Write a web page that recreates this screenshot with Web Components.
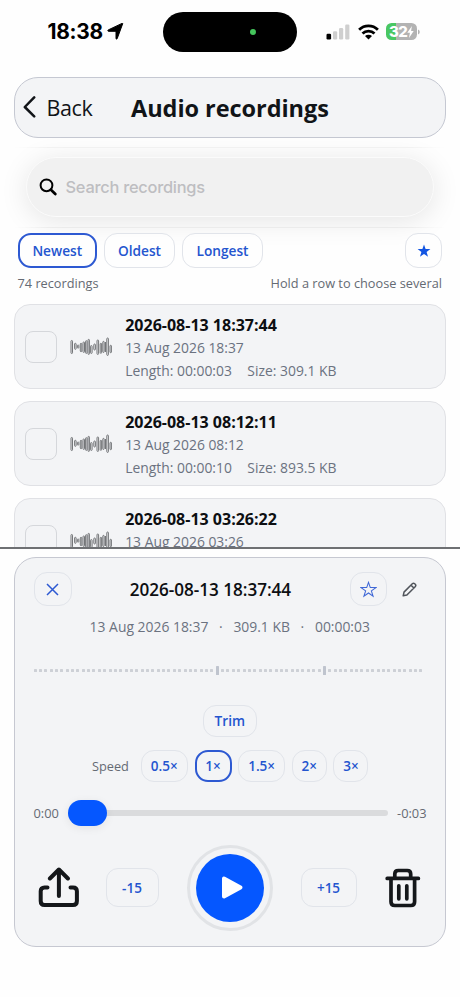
<!DOCTYPE html>
<html lang="en">
<head>
<meta charset="utf-8">
<title>Audio recordings</title>
<style>
html,body{margin:0;padding:0;background:#fefefe}
body{width:460px;height:997px;overflow:hidden;font-family:"Open Sans","Noto Sans",sans-serif;color:#111418}
</style>
</head>
<body>
<recordings-app></recordings-app>
<script>
const define = (name, html) => {
  const t = document.createElement('template');
  t.innerHTML = '<style>*{box-sizing:border-box}:host{box-sizing:border-box}svg{display:block;flex:none}</style>' + html;
  customElements.define(name, class extends HTMLElement {
    constructor() {
      super();
      this.attachShadow({ mode: 'open' }).appendChild(t.content.cloneNode(true));
    }
  });
};

define('status-bar', `
<style>
:host{display:grid;grid-template-columns:163px 134px 1fr;height:77px;padding-top:12px;align-items:start}
.l,.r{display:flex;align-items:center;height:39px}
.l{padding-left:47.5px;gap:4px;font:700 20.9px/39px Inter,sans-serif;letter-spacing:-.25px;color:#000}
.isl{height:39.5px;border-radius:20px;background:#000;display:flex;align-items:center;justify-content:flex-end;padding-right:41px}
.isl i{width:6.5px;height:6.5px;border-radius:50%;background:#45c55c}
.r{padding-left:29px}
.bat{margin-left:7.5px;width:31px;height:16.5px;border-radius:5.5px;background:linear-gradient(90deg,#49c763 0 10px,#b3b3b3 10px);display:flex;align-items:center;justify-content:center;color:#fff;font:800 15px/16px Inter,sans-serif;letter-spacing:-.7px}
</style>
<div class="l"><span>18:38</span><svg width="17" height="17" viewBox="0 0 17 17"><path d="M15.700.7 10.200 15.600c-.3.8-1.200.7-1.200-.2V8.300H1.700C.6 8.300.5 7.300 1.300 6.900L15 .4c.6-.2.9-.1.700.3z" fill="#000" stroke="#000" stroke-width="1" stroke-linejoin="round"/></svg></div>
<div class="isl"><i></i></div>
<div class="r">
<svg width="25" height="16" viewBox="0 0 25 16"><rect x="0.5" y="9.8" width="4.6" height="5.7" rx="1.2"/><g fill="#cfcfcf"><rect x="7" y="7.3" width="4.2" height="8.2" rx="1.2"/><rect x="13" y="4" width="4.2" height="11.5" rx="1.2"/><rect x="19.2" y=".6" width="4.2" height="14.9" rx="1.2"/></g></svg>
<svg style="margin-left:6.5px" width="21" height="16" viewBox="0 0 21 16"><g fill="none" stroke="#000" stroke-width="2.8"><path d="M1.1 5.8a13.4 13.4 0 0 1 18.8 0"/><path d="M4.5 9.5a8.6 8.6 0 0 1 12 0"/></g><path d="M7 12.1a5.1 5.1 0 0 1 7 0L10.5 15.5z"/></svg>
<div class="bat"><span>32</span><svg width="7" height="12" viewBox="0 0 7 12"><path d="M4.9 0 .3 6.7h2.6L2 12l4.7-6.9H4.1z" fill="#fff"/></svg></div>
<svg style="margin-left:1px" width="2" height="6" viewBox="0 0 2 6"><path d="M0 .5Q1.8 1.2 1.8 3T0 5.5z" fill="#b3b3b3"/></svg>
</div>`);

define('nav-header', `
<style>
:host{display:flex;align-items:center;height:60.5px;margin:0 14px;padding-left:8px;border:1px solid #c5c8d2;border-radius:24px;background:#f3f4f6}
.b{font-size:21.5px;line-height:30px;margin-left:9.5px;width:84.5px;letter-spacing:-.4px;padding-top:1px}
.t{font-size:23.5px;line-height:30px;font-weight:700;letter-spacing:-.05px;padding-top:1px}
</style>
<svg width="14" height="22" viewBox="0 0 14 22"><path d="M11.2 1.4 1.8 11l9.4 9.4" fill="none" stroke="#111418" stroke-width="2.5" stroke-linecap="round" stroke-linejoin="round"/></svg>
<span class="b"><slot name="back"></slot></span><span class="t"><slot></slot></span>`);

define('search-field', `
<style>
:host{display:block;margin-top:9px;height:81px;padding:10.5px 26px 0;
background:linear-gradient(90deg,transparent,#f5f5f5 8% 92%,transparent) 14px 0/432px 1px no-repeat,linear-gradient(90deg,transparent,#f3f3f3 8% 92%,transparent) 14px 80px/432px 1px no-repeat}
.f{height:59.5px;border-radius:30px;background:#f1f1f1;border:1.5px solid #fbfbfb;box-shadow:0 4px 28px rgba(0,0,0,.10);display:flex;align-items:center;padding-left:12px;font:500 16.4px/24px Inter,sans-serif;color:#bebec1;letter-spacing:-.25px}
svg{margin-right:8.5px}
</style>
<div class="f"><svg width="18" height="18" viewBox="0 0 18 18"><circle cx="7.5" cy="7.3" r="5.9" fill="none" stroke="#000" stroke-width="2"/><path d="M11.9 11.8l4.4 4.2" stroke="#000" stroke-width="2.7" stroke-linecap="round"/></svg><slot></slot></div>`);

define('pill-button', `
<style>
:host{display:inline-flex;align-items:center;justify-content:center;flex:none;height:34.5px;border:1px solid #e1e4ea;border-radius:13px;color:#2455cf;font-weight:600;font-size:13.7px;line-height:20px;background:var(--pill,transparent);white-space:nowrap}
:host([active]){border:2px solid #2d59d2}
</style><slot></slot>`);

define('filter-bar', `
<style>
:host{display:block;padding:0 18px 0 17.5px;margin-top:5.5px}
.c{display:flex;gap:7px}
.c>:last-child{margin-left:auto}
.c pill-button{padding-top:1px}
.m{display:flex;justify-content:space-between;font-size:12.75px;line-height:18px;margin-top:6px;color:#656a73}
pill-button{--pill:rgba(254,254,254,.8)}
</style>
<div class="c"><pill-button active style="width:79.5px">Newest</pill-button><pill-button style="width:71px">Oldest</pill-button><pill-button style="width:81px">Longest</pill-button><pill-button style="width:37px"><svg width="14" height="14" viewBox="0 0 14 14"><path d="M7 .5l1.6 4.6h4.8L9.6 8l1.4 4.7-4-2.8-4 2.8L4.4 8 .6 5.1h4.8z" fill="#1355e2"/></svg></pill-button></div>
<div class="m"><span>74 recordings</span><span>Hold a row to choose several</span></div>`);

define('recording-row', `
<style>
:host{display:flex;height:85px;border:1px solid #e0e1e5;border-radius:16px;background:#f3f4f6;padding:0 0 0 10px;flex:none;align-items:center}
.k{width:32px;height:32px;border:1.5px solid #d5d7db;border-radius:8px;margin-right:12.8px}
.x{margin-left:13.4px;align-self:flex-start;padding-top:8.5px;line-height:23px;font-size:13.88px;color:#6b7280}
b{display:block;color:#0d0f12;font-size:16px;line-height:22px;margin-bottom:.5px}
.y{display:flex;gap:15.5px}
</style>
<div class="k"></div>
<svg width="42" height="20" viewBox="0 0 42 20"><g fill="none" stroke="#6d6f72" stroke-width=".95">
<rect x="1" y="3.5" width="1.5" height="13" rx=".7"/><rect x="4.6" y="6.3" width="1.5" height="6" rx=".7"/><rect x="7.4" y="8" width="1.4" height="3.2" rx=".7"/><rect x="10.3" y="6.3" width="1.5" height="8.4" rx=".7"/><rect x="13" y="5" width="1.5" height="10.4" rx=".7"/><rect x="15.6" y="3.7" width="1.4" height="12.7" rx=".7"/><rect x="18" y="2.4" width="1.4" height="15" rx=".7"/><rect x="20.6" y="8.6" width="1.5" height="7.8" rx=".7"/><rect x="23.8" y="7" width="1.6" height="6" rx=".8"/><rect x="27" y="3" width="1.6" height="14.4" rx=".8"/><rect x="30.2" y="6.3" width="1.4" height="10" rx=".7"/><rect x="32.8" y="4.4" width="1.4" height="11" rx=".7"/><rect x="36.8" y="1" width="1.6" height="17.4" rx=".8"/><rect x="40" y="8.3" width="1.4" height="7.4" rx=".7"/><path d="M35.500 5v10"/></g></svg>
<div class="x"><b><slot></slot></b><slot name="date"></slot><div class="y"><slot name="length"></slot><slot name="size"></slot></div></div>`);

define('recording-list', `
<style>:host{display:flex;flex-direction:column;gap:12px;height:257px;padding:12.5px 14px 0;overflow:hidden;border-bottom:2px solid #6e7073}</style><slot></slot>`);

define('wave-form', `
<style>:host{display:flex;align-items:center;height:9px;gap:2.36px;margin:0 5px 0 0}
i{width:3px;height:3px;background:#cdd0d6;flex:none;border-radius:.6px}
i:first-child{height:5px;background:#bcc0c6}i.t{height:9px;background:#bfc4ce}</style>`);

define('player-panel', `
<style>
:host{display:flex;flex-direction:column;margin:8px 14px 0;height:390px;border:1px solid #c6c8d1;border-radius:22px;background:#f3f4f6;padding:14.5px 19px 0 18.5px;flex:none}
.h{display:flex;align-items:center;height:34px}
.h b{flex:1;text-align:center;font-weight:600;font-size:17.1px;line-height:26px;letter-spacing:-.02px;color:#0d0f12;padding-top:1px}
.meta{display:flex;justify-content:center;gap:10.7px;font-size:13.9px;line-height:20px;margin-top:10.5px;color:#6b7280}
wave-form{margin-top:29.5px}
.trim{display:flex;justify-content:center;margin-top:29.5px}
.sp{display:flex;align-items:center;margin-top:13px;padding-left:58.5px;gap:6.8px;font-size:12.75px;color:#656a73}
.sp pill-button{font-size:13.5px}
.sl{display:flex;align-items:center;margin-top:17px;height:28px;font-size:12.85px;color:#656a73}
.sl span{flex:none;width:25px}
.tr{flex:none;width:320.5px;height:6.5px;border-radius:4px;background:#dadbdd;margin:0 9px;display:flex;align-items:center}
.th{width:39.5px;height:25.5px;border-radius:13px;background:#0557ff;box-shadow:0 2px 10px rgba(0,0,0,.07)}
.ct{display:flex;align-items:center;margin-top:16.5px;height:88px;padding-left:3px}
.pl{width:86px;height:86px;border-radius:50%;border:3px solid #e1e3e6;padding:6px;margin:0 28px}
.pl div{width:68px;height:68px;border-radius:50%;background:#0557ff;display:grid;place-items:center;padding-left:5.5px}
.ct pill-button{height:39px;border-radius:12px;font-size:13.5px}
</style>
<div class="h"><pill-button style="width:38px"><svg width="13" height="13" viewBox="0 0 13 13"><path d="M1 1l11 11M12 1 1 12" stroke="#2d59d2" stroke-width="1.5"/></svg></pill-button><b><slot name="title"></slot></b><pill-button style="width:37.5px"><svg width="17" height="17" viewBox="0 0 16 16"><path d="M8 1.3l1.7 4.9h5.2l-4.2 3.1 1.6 5L8 11.3l-4.3 3 1.6-5L1.1 6.2h5.2z" fill="none" stroke="#4068d6" stroke-width="1"/></svg></pill-button><svg style="margin:0 9.5px 0 14.5px" width="15" height="15" viewBox="0 0 15 15"><path d="M1.2 13.8l.8-3.7L10.3 1.8a1.7 1.7 0 0 1 2.4 0l.5.5a1.7 1.7 0 0 1 0 2.4L4.9 13zM9 3.1l2.9 2.9" fill="none" stroke="#50545b" stroke-width="1.5" stroke-linejoin="round"/></svg></div>
<div class="meta"><span>13 Aug 2026 18:37</span><span>·</span><span>309.1 KB</span><span>·</span><span>00:00:03</span></div>
<wave-form></wave-form>
<div class="trim"><pill-button style="width:54px;height:32.5px">Trim</pill-button></div>
<div class="sp"><span style="width:42px">Speed</span><pill-button style="width:47px;height:32px">0.5×</pill-button><pill-button active style="width:37px;height:32px">1×</pill-button><pill-button style="width:46.5px;height:32px">1.5×</pill-button><pill-button style="width:35px;height:32px">2×</pill-button><pill-button style="width:35px;height:32px">3×</pill-button></div>
<div class="sl"><span>0:00</span><div class="tr"><div class="th"></div></div><span>-0:03</span></div>
<div class="ct">
<svg width="42" height="42" viewBox="0 0 42 42"><g fill="none" stroke="#14171a" stroke-width="4" stroke-linecap="round" stroke-linejoin="round"><path d="M21.9 29V3.5M12.9 11.5l9-9 9 9"/><path d="M10.5 20.5H7.5Q3.7 20.5 3.7 24.3v9.600Q3.700 38 7.500 38h28.500Q39.900 38 39.900 34v-9.700Q39.900 20.500 36 20.500h-2.500"/></g></svg>
<pill-button style="width:53px;margin-left:27px">-15</pill-button>
<div class="pl"><div><svg width="23" height="25" viewBox="0 0 23 25"><path d="M3 3.5v18l16.5-9z" fill="#fff" stroke="#fff" stroke-width="4" stroke-linejoin="round"/></svg></div></div>
<pill-button style="width:56px">+15</pill-button>
<svg style="margin-left:28px" width="36" height="40" viewBox="0 0 36 40"><g fill="none" stroke="#14171a" stroke-width="3.7" stroke-linecap="round" stroke-linejoin="round"><path d="M2.2 10.4h31.200M9.800 10V6Q9.800 2.500 13.300 2.500h8.900Q25.700 2.500 25.700 6v4"/><path d="M6 11v22.700Q6 37.500 9.800 37.500h16Q29.600 37.500 29.600 33.700V11"/><path d="M13.800 17.800v13M21.800 17.800v13"/></g></svg>
</div>`);

define('recordings-app', `
<style>:host{display:flex;flex-direction:column;width:460px;height:997px;overflow:hidden;background:#fefefe}
search-field,status-bar,nav-header,filter-bar,recording-list{flex:none}</style>
<status-bar></status-bar>
<nav-header><span slot="back">Back</span>Audio recordings</nav-header>
<search-field>Search recordings</search-field>
<filter-bar></filter-bar>
<recording-list>
<recording-row>2026-08-13 18:37:44<span slot="date">13 Aug 2026 18:37</span><span slot="length">Length: 00:00:03</span><span slot="size">Size: 309.1 KB</span></recording-row>
<recording-row>2026-08-13 08:12:11<span slot="date">13 Aug 2026 08:12</span><span slot="length">Length: 00:00:10</span><span slot="size">Size: 893.5 KB</span></recording-row>
<recording-row>2026-08-13 03:26:22<span slot="date">13 Aug 2026 03:26</span></recording-row>
</recording-list>
<player-panel><span slot="title">2026-08-13 18:37:44</span></player-panel>`);

const wave = document.querySelector('recordings-app').shadowRoot.querySelector('player-panel').shadowRoot.querySelector('wave-form').shadowRoot;
for (let n = 0; n < 73; n++) {
  const bar = document.createElement('i');
  if (n === 34 || n === 54) bar.className = 't';
  wave.appendChild(bar);
}
</script>
</body>
</html>
